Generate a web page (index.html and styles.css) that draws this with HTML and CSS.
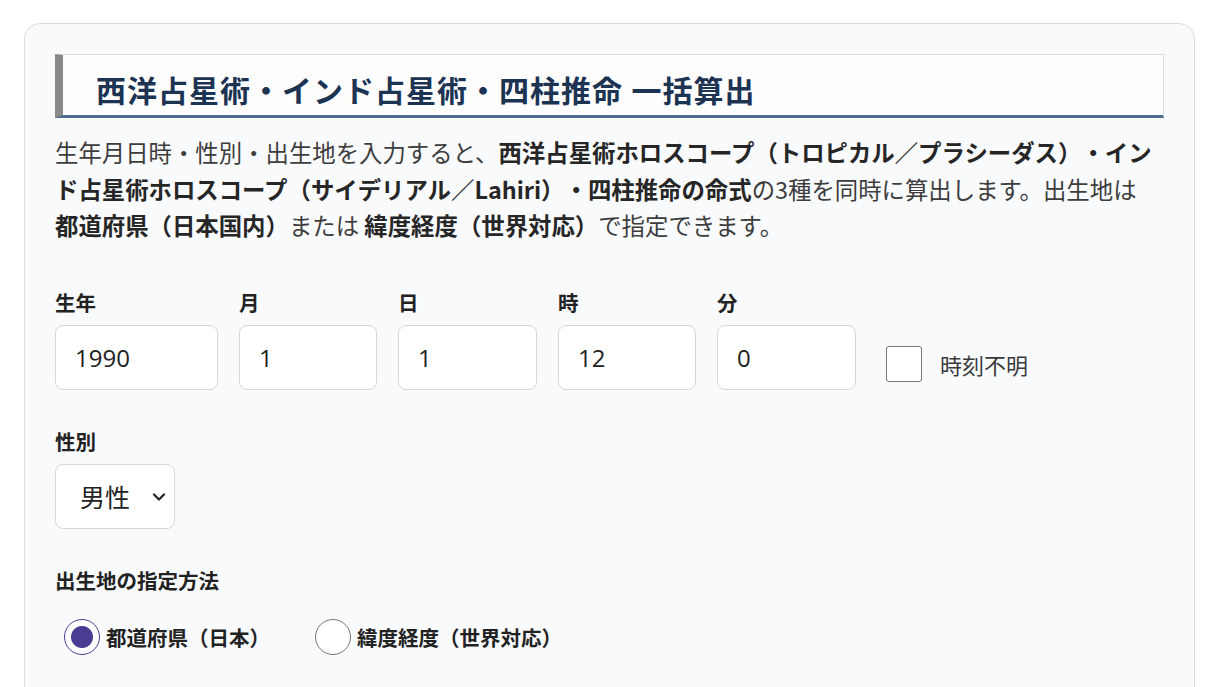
FILE: index.html
```html
<!DOCTYPE html>
<html lang="ja">

<head>
  <meta charset="UTF-8">
  <title>西洋占星術・インド占星術・四柱推命 一括算出</title>
  <link rel="stylesheet" href="styles.css">
</head>

<body>
  <div class="card">
    <h2 class="title">西洋占星術・インド占星術・四柱推命 一括算出</h2>
    <p class="lead">生年月日時・性別・出生地を入力すると、<strong>西洋占星術ホロスコープ（トロピカル／プラシーダス）・インド占星術ホロスコープ（サイデリアル／Lahiri）・四柱推命の命式</strong>の3種を同時に算出します。出生地は <strong>都道府県（日本国内）</strong>または <strong>緯度経度（世界対応）</strong>で指定できます。</p>

    <div class="row birth">
      <div class="field f-year">
        <label>生年</label>
        <input type="text" value="1990">
      </div>
      <div class="field">
        <label>月</label>
        <input type="text" value="1">
      </div>
      <div class="field f-wide">
        <label>日</label>
        <input type="text" value="1">
      </div>
      <div class="field">
        <label>時</label>
        <input type="text" value="12">
      </div>
      <div class="field f-wide">
        <label>分</label>
        <input type="text" value="0">
      </div>
      <label class="check">
        <input type="checkbox">
        <span>時刻不明</span>
      </label>
    </div>

    <div class="group">
      <label>性別</label>
      <span class="select">
        <select>
          <option>男性</option>
          <option>女性</option>
        </select>
        <svg class="chevron" width="14" height="10" viewBox="0 0 14 10">
          <path d="M2 2.5 L7 7.5 L12 2.5" fill="none" stroke="#222" stroke-width="2.2" stroke-linecap="round" stroke-linejoin="round" />
        </svg>
      </span>
    </div>

    <div class="group">
      <label>出生地の指定方法</label>
      <div class="radios">
        <label class="radio"><input type="radio" name="place" checked><span>都道府県（日本）</span></label>
        <label class="radio"><input type="radio" name="place"><span>緯度経度（世界対応）</span></label>
      </div>
    </div>
  </div>
</body>

</html>
```

FILE: styles.css
```css
body,
h2,
p {
  margin: 0;
  padding: 0;
}

body {
  background: #fff;
  font-family: "Open Sans", "Noto Sans CJK JP", sans-serif;
  color: #222;
  /* 括弧・中黒を詰めずに全角幅のまま組む */
  text-spacing-trim: space-all;
}

.card {
  width: 1109px;
  margin: 23px 0 0 24px;
  padding: 30px 30px 60px;
  border: 1px solid #dcdcdc;
  border-radius: 16px;
  background: #f9fafc;
}

/* 見出し：左に太い縦線、下に青いライン */
.title {
  height: 46px;
  padding: 14px 0 0 33px;
  margin-bottom: 16px;
  border-top: 1px solid #dedede;
  border-right: 1px solid #dedede;
  border-left: 8px solid #8a8a8a;
  border-bottom: 3px solid #4f6e8f;
  background: #fdfdfe;
  color: #1c3352;
  font: 700 30px/46px "Liberation Serif", "Noto Sans CJK JP", serif;
  letter-spacing: 1px;
}

.lead {
  font-family: "Noto Sans CJK JP", sans-serif;
  font-size: 23.4px;
  line-height: 36.5px;
  color: #3d3d3d;
}

.lead strong {
  color: #262626;
}

.row {
  display: flex;
  align-items: flex-end;
  gap: 21px;
  margin-top: 43px;
}

.field label,
.group > label {
  display: block;
  font: 700 20.5px/30px "Noto Sans CJK JP", sans-serif;
  color: #222;
  margin-bottom: 8px;
}

.field input {
  box-sizing: border-box;
  width: 138px;
  height: 65px;
  padding: 0 19px;
  border: 1px solid #d7d7d7;
  border-radius: 8px;
  background: #fff;
  font: 24px "Open Sans", sans-serif;
  color: #222;
  outline: none;
}

.f-year input {
  width: 163px;
}

.f-wide input {
  width: 139px;
}

.check {
  display: flex;
  align-items: center;
  gap: 18px;
  margin: 0 0 8px 9px;
  font: 22px/36px "Noto Sans CJK JP", sans-serif;
  color: #3a3a3a;
}

.check input {
  appearance: none;
  width: 36px;
  height: 36px;
  margin: 0;
  border: 1.5px solid #767676;
  border-radius: 3px;
  background: #fff;
}

.group {
  margin-top: 36px;
}

.select {
  position: relative;
  display: inline-block;
}

.select select {
  appearance: none;
  box-sizing: border-box;
  width: 120px;
  height: 65px;
  padding: 0 0 0 24px;
  border: 1px solid #d7d7d7;
  border-radius: 8px;
  background: #fff;
  font: 25px "Noto Sans CJK JP", sans-serif;
  color: #222;
  outline: none;
}

.chevron {
  position: absolute;
  right: 9px;
  top: 28px;
  pointer-events: none;
}

.radios {
  display: flex;
  gap: 45px;
  margin: 24px 0 0 9px;
}

.radio {
  display: flex;
  align-items: center;
  gap: 6px;
  font: 700 20.5px/36px "Noto Sans CJK JP", sans-serif;
  color: #222;
}

.radio input {
  appearance: none;
  box-sizing: border-box;
  width: 36px;
  height: 36px;
  margin: 0;
  border: 1.5px solid #767676;
  border-radius: 50%;
  background: #fff;
}

.radio input:checked {
  border-color: #4b3c8e;
  background: radial-gradient(circle, #4b3c93 0 10.5px, #fff 11.5px);
}
```
